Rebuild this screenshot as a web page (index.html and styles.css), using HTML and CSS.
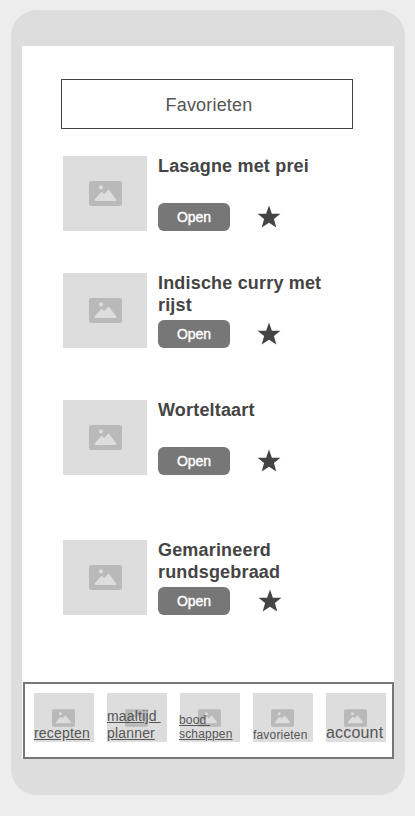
FILE: index.html
```html
<!DOCTYPE html>
<html lang="nl">
<head>
<meta charset="utf-8">
<title>Favorieten</title>
<link rel="stylesheet" href="styles.css">
</head>
<body>
<svg class="defs" aria-hidden="true">
  <symbol id="image" viewBox="0 0 33 25">
    <path fill="#b9b9b9" fill-rule="evenodd" d="M2.500 0H30.500A2.500 2.500 0 0 1 33 2.500V22.500A2.500 2.500 0 0 1 30.500 25H2.500A2.500 2.500 0 0 1 0 22.500V2.500A2.500 2.500 0 0 1 2.500 0ZM12 4.200A2.100 2.100 0 1 0 12 8.400A2.100 2.100 0 1 0 12 4.200ZM6.300 19.900H26.500Q27.900 19.600 27.200 18.300L20 9.100Q19.400 8.600 18.800 9.100L15.200 13.300L13.500 11.200Q12.800 10.600 12.100 11.200L5.800 18.300Q5.100 19.600 6.300 19.900Z"/>
  </symbol>
  <symbol id="star" viewBox="0 0 24 24">
    <path fill="#444" d="M12 .5 14.900 8.800H23.500L16.900 14.100 19.300 22.500 12 17.700 4.700 22.500 7.100 14.100.5 8.800H9.100Z"/>
  </symbol>
</svg>
<div class="phone">
  <div class="screen">
    <h1 class="title">Favorieten</h1>
    <main class="list">
      <article class="recipe">
        <div class="thumb"><svg class="thumb-icon"><use href="#image"/></svg></div>
        <div class="info"><h2 class="name">Lasagne met prei</h2>
          <div class="actions"><button class="open">Open</button><svg class="star"><use href="#star"/></svg></div></div>
      </article>
      <article class="recipe">
        <div class="thumb"><svg class="thumb-icon"><use href="#image"/></svg></div>
        <div class="info"><h2 class="name">Indische curry met rijst</h2>
          <div class="actions"><button class="open">Open</button><svg class="star"><use href="#star"/></svg></div></div>
      </article>
      <article class="recipe">
        <div class="thumb"><svg class="thumb-icon"><use href="#image"/></svg></div>
        <div class="info"><h2 class="name">Worteltaart</h2>
          <div class="actions"><button class="open">Open</button><svg class="star"><use href="#star"/></svg></div></div>
      </article>
      <article class="recipe">
        <div class="thumb"><svg class="thumb-icon"><use href="#image"/></svg></div>
        <div class="info"><h2 class="name">Gemarineerd rundsgebraad</h2>
          <div class="actions"><button class="open">Open</button><svg class="star"><use href="#star"/></svg></div></div>
      </article>
    </main>
    <nav class="nav">
      <div class="tab"><svg class="tab-icon"><use href="#image"/></svg><span class="label link">recepten</span></div>
      <div class="tab"><svg class="tab-icon"><use href="#image"/></svg><span class="label link">maaltijd 
planner</span></div>
      <div class="tab"><svg class="tab-icon"><use href="#image"/></svg><span class="label link small shifted">bood 
schappen</span></div>
      <div class="tab"><svg class="tab-icon"><use href="#image"/></svg><span class="label small">favorieten</span></div>
      <div class="tab"><svg class="tab-icon"><use href="#image"/></svg><span class="label large">account</span></div>
    </nav>
  </div>
</div>
</body>
</html>
```

FILE: styles.css
```css
* { box-sizing: border-box; }
body {
  margin: 0;
  height: 816px;
  padding: 10px 10px 21px 11px;
  background: #ededed;
  color: #444;
  font-family: "Liberation Sans", Arial, sans-serif;
  letter-spacing: 0.18px;
}
.defs { display: none; }
svg { display: block; }
.phone {
  width: 394px;
  height: 785px;
  padding: 36px 11px;
  border-radius: 26px;
  background: #ddd;
}
.screen {
  display: flex;
  flex-direction: column;
  width: 372px;
  height: 713px;
  padding-top: 33px;
  background: #fff;
}
.title {
  flex: none;
  width: 292px;
  height: 50px;
  margin: 0 0 27px 39px;
  padding-left: 4px;
  border: 1px solid #444;
  font-size: 18px;
  font-weight: 400;
  line-height: 50px;
  text-align: center;
  color: #555;
}
.list { padding-left: 41px; }
.recipe {
  display: flex;
  gap: 11px;
  height: 75px;
  margin-bottom: 42px;
}
.recipe:nth-child(2) { margin-bottom: 52px; }
.recipe:nth-child(3) { margin-bottom: 65px; }
.recipe:nth-child(4) { margin-bottom: 0; }
.thumb {
  display: flex;
  align-items: center;
  justify-content: center;
  width: 84px;
  height: 75px;
  background: #ddd;
}
.thumb-icon { width: 33px; height: 25px; margin-left: 1px; }
.info {
  display: flex;
  flex-direction: column;
  justify-content: space-between;
  width: 175px;
}
.name {
  margin: -1px 0 0;
  height: 44px;
  font-size: 18px;
  line-height: 22px;
}
.actions { display: flex; align-items: center; gap: 27px; }
.open {
  width: 72px;
  height: 28px;
  padding: 0;
  border: 0;
  border-radius: 6px;
  background: #777;
  color: #fff;
  font: 14px/28px "Liberation Sans", Arial, sans-serif;
  -webkit-text-stroke: 0.4px #fff;
}
.star { width: 24px; height: 24px; }
.recipe:nth-child(4) .actions { gap: 28px; }
.nav {
  display: flex;
  gap: 13px;
  width: 371px;
  height: 77px;
  margin: auto 0 0 1px;
  padding: 9px 0 9px 9px;
  border: 2px solid #777;
}
.tab {
  position: relative;
  flex: none;
  width: 60px;
  height: 49px;
  padding: 15.500px 0 0 18px;
  background: #ddd;
}
.tab-icon { width: 23px; height: 18px; }
.label {
  position: absolute;
  left: 0;
  bottom: 0;
  font-size: 14px;
  line-height: 17px;
  white-space: pre;
  color: #555;
}
.link { text-decoration: underline; }
.small { font-size: 12px; line-height: 14px; }
.large { font-size: 16px; line-height: 19px; }
.shifted { left: -1px; bottom: 1px; }
```
